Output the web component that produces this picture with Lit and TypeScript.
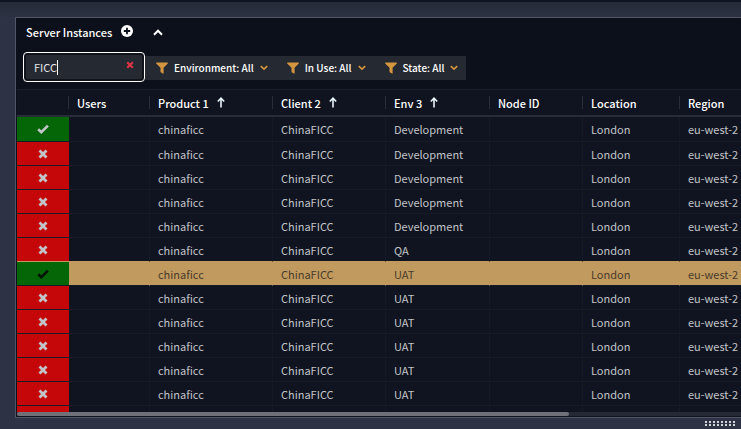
import { LitElement, html, svg, css } from "lit";
import { customElement, property, state } from "lit/decorators.js";
import { classMap } from "lit/directives/class-map.js";

interface Instance {
  up: boolean;
  env: string;
  selected?: boolean;
}

const instances: Instance[] = [
  { up: true, env: "Development" },
  { up: false, env: "Development" },
  { up: false, env: "Development" },
  { up: false, env: "Development" },
  { up: false, env: "Development" },
  { up: false, env: "QA" },
  { up: true, env: "UAT", selected: true },
  { up: false, env: "UAT" },
  { up: false, env: "UAT" },
  { up: false, env: "UAT" },
  { up: false, env: "UAT" },
  { up: false, env: "UAT" },
  { up: false, env: "UAT" },
];

const columns = [
  { key: "status", label: "", sorted: false },
  { key: "users", label: "Users", sorted: false },
  { key: "product", label: "Product 1", sorted: true },
  { key: "client", label: "Client 2", sorted: true },
  { key: "env", label: "Env 3", sorted: true },
  { key: "node", label: "Node ID", sorted: false },
  { key: "location", label: "Location", sorted: false },
  { key: "region", label: "Region", sorted: false },
];

const shapes = {
  plus: { box: "0 0 12 12", body: svg`<circle cx="6" cy="6" r="6" fill="currentColor"/><path d="M6 2.8v6.4M2.8 6h6.4" stroke="#0c101b" stroke-width="1.8"/>` },
  up: { box: "0 0 10 7", body: svg`<path d="M1 5.7 5 1.7 9 5.7" fill="none" stroke="currentColor" stroke-width="2"/>` },
  down: { box: "0 0 8 6", body: svg`<path d="M.8 1.2 4 4.2 7.2 1.2" fill="none" stroke="currentColor" stroke-width="1.7"/>` },
  arrow: { box: "0 0 8 11", body: svg`<path d="M4 10.5V1.5M.8 4.5 4 1.2 7.2 4.5" fill="none" stroke="currentColor" stroke-width="1.6"/>` },
  filter: { box: "0 0 12 12", body: svg`<path d="M.6.5h10.8c.5 0 .7.6.4.9L7.6 5.8v5.4c0 .4-.5.6-.8.4L4.8 10.200a.6.6 0 0 1-.3-.5V5.8L.2 1.4C-.1 1.1.1.5.6.5z" fill="currentColor"/>` },
  check: { box: "0 0 12 10", body: svg`<path d="M1.2 5.2 4.3 8.2 10.9 1.6" fill="none" stroke="currentColor" stroke-width="2.6"/>` },
  cross: { box: "0 0 10 10", body: svg`<path d="M1.5 1.5 8.5 8.5M8.5 1.5 1.5 8.5" fill="none" stroke="currentColor" stroke-width="2.8"/>` },
};

const icon = (name: keyof typeof shapes) =>
  html`<svg class="icon ${name}" viewBox=${shapes[name].box} aria-hidden="true">${shapes[name].body}</svg>`;

const iconStyles = css`
  .icon { display: block; flex: none; }
  .plus { width: 12px; height: 12px; }
  .up { width: 10px; height: 7px; }
  .down { width: 8px; height: 6px; }
  .arrow { width: 8px; height: 11px; }
  .filter { width: 12px; height: 12px; }
  .check { width: 12px; height: 10px; }
  .cross { width: 10px; height: 10px; }
  button {
    border: 0;
    margin: 0;
    padding: 0;
    background: none;
    color: inherit;
    font: inherit;
    cursor: pointer;
  }
`;

@customElement("filter-bar")
export class FilterBar extends LitElement {
  @state() query = "FICC";

  static styles = [
    iconStyles,
    css`
      :host { display: flex; align-items: center; }
      .search {
        position: relative;
        display: flex;
        align-items: center;
        box-sizing: border-box;
        width: 122px;
        height: 30px;
        padding: 2px;
        border: 1px solid #fff;
        border-radius: 4px;
        background: #11141a;
      }
      input {
        box-sizing: border-box;
        width: 100%;
        height: 24px;
        margin: 0;
        padding: 0 24px 0 8px;
        border: 0;
        border-radius: 2px;
        outline: 0;
        background: #252932;
        color: #e6e7ea;
        font: inherit;
      }
      .caret {
        position: absolute;
        left: 33px;
        top: 7px;
        width: 1px;
        height: 15px;
        background: #fff;
      }
      .clear {
        position: absolute;
        right: 10px;
        top: 8px;
        color: #dc3345;
      }
      .clear .icon { width: 8px; height: 8px; }
      .filters { display: flex; background: #252932; margin-top: 1px; }
      .filters button {
        display: flex;
        align-items: center;
        height: 24px;
        padding: 0 8px 0 11px;
        color: #fff;
        font-weight: 500;
        font-size: 10px;
      }
      .filters .icon { color: #d3963f; }
      .filters .filter,
      .filters span { margin-right: 6px; }
    `,
  ];

  render() {
    return html`
      <div class="search">
        <input aria-label="Search instances" .value=${this.query} />
        <span class="caret"></span>
        <button class="clear" aria-label="Clear search" @click=${() => (this.query = "")}>${icon("cross")}</button>
      </div>
      <div class="filters">
        ${["Environment: All", "In Use: All", "State: All"].map(
          (label) => html`<button>${icon("filter")}<span>${label}</span>${icon("down")}</button>`
        )}
      </div>
    `;
  }
}

@customElement("instance-table")
export class InstanceTable extends LitElement {
  @property({ attribute: false }) rows: Instance[] = [];

  static styles = [
    iconStyles,
    css`
      :host { display: flex; flex-direction: column; min-height: 0; background: #0f1420; }
      .viewport { flex: 1; min-height: 0; overflow: hidden; }
      table {
        width: 100%;
        min-width: 960px;
        table-layout: fixed;
        border-collapse: separate;
        border-spacing: 0;
      }
      .status { width: 52px; }
      .users { width: 81px; }
      .product { width: 123px; }
      .client { width: 113px; }
      .env { width: 104px; }
      .node { width: 93px; }
      .location { width: 97px; }
      th, td {
        box-sizing: border-box;
        padding: 0 0 0 8px;
        text-align: left;
        white-space: nowrap;
        line-height: 20px;
      }
      th {
        height: 28px;
        padding: 0;
        border-top: 1px solid #1a1e2a;
        border-bottom: 2px solid #282b38;
        color: #fff;
        font-weight: 500;
      }
      .head {
        display: flex;
        align-items: center;
        gap: 8px;
        box-sizing: border-box;
        height: 13px;
        padding-left: 8px;
        border-right: 1px solid #2b2e3a;
      }
      .head .arrow { color: #e8f4fa; }
      td {
        height: 24px;
        border-bottom: 1px solid #171b28;
        border-right: 1px solid #151926;
        color: #c3c4c8;
      }
      tbody tr:first-child td { height: 25px; }
      td.flag { padding: 0; border-right: 0; background: #c60709; }
      td.flag.ok { background: #046607; }
      .flag .icon { margin: 0 auto; }
      .before td { border-bottom-color: #c19a60; }
      .selected td { background: #c19a60; border-right-color: #c19a60; color: #493a28; }
      .selected td.flag { color: #071307; }
      .track { height: 4px; margin-bottom: 1px; background: #252835; }
      .thumb { width: 76.3%; height: 4px; border-radius: 2px; background: #6f7078; }
    `,
  ];

  render() {
    return html`
      <div class="viewport">
        <table>
          <thead>
            <tr>
              ${columns.map(
                (c) => html`<th class=${c.key} scope="col"><div class="head">${c.label}${c.sorted ? icon("arrow") : ""}</div></th>`
              )}
            </tr>
          </thead>
          <tbody>
            ${this.rows.map(
              (r, i) => html`
                <tr class=${classMap({ selected: !!r.selected, before: !!this.rows[i + 1]?.selected })}>
                  <td class=${classMap({ flag: true, ok: r.up })} aria-label=${r.up ? "Up" : "Down"}>
                    ${icon(r.up ? "check" : "cross")}
                  </td>
                  <td></td>
                  <td>chinaficc</td>
                  <td>ChinaFICC</td>
                  <td>${r.env}</td>
                  <td></td>
                  <td>London</td>
                  <td>eu-west-2</td>
                </tr>
              `
            )}
          </tbody>
        </table>
      </div>
      <div class="track"><div class="thumb"></div></div>
    `;
  }
}

@customElement("app-root")
export class AppRoot extends LitElement {
  static styles = [
    iconStyles,
    css`
      :host {
        display: flex;
        flex-direction: column;
        box-sizing: border-box;
        height: 100vh;
        overflow: hidden;
        border-top: 2px solid #0f1420;
        background: linear-gradient(#252a38, #2d3244 16px);
        color: #fff;
        font: 11px/16px "Noto Sans CJK SC", "Noto Sans", sans-serif;
      }
      .panel {
        flex: 1;
        min-height: 0;
        display: flex;
        flex-direction: column;
        margin: 15px 0 0 15px;
        padding-left: 1px;
        border: 1px solid #515565;
        border-right: 0;
        background: #0c101b;
      }
      header {
        display: flex;
        align-items: center;
        height: 28px;
        padding: 2px 0 0 9px;
      }
      h1 { margin: 0 0 4px; font-size: 11px; font-weight: 500; }
      .add { margin: 0 20px 6px 9px; }
      .collapse { margin-bottom: 3px; }
      filter-bar { padding: 4px 0 7px 6px; }
      instance-table { flex: 1; }
      footer { display: flex; justify-content: flex-end; height: 11px; padding: 3px 6px 0 0; box-sizing: border-box; }
      .grip {
        width: 30px;
        height: 5px;
        background: conic-gradient(from 270deg at 2px 2px, #d5d6da 90deg, transparent 0) 0 0 / 4px 3px;
      }
    `,
  ];

  render() {
    return html`
      <section class="panel">
        <header>
          <h1>Server Instances</h1>
          <button class="add" aria-label="Add instance">${icon("plus")}</button>
          <button class="collapse" aria-label="Collapse">${icon("up")}</button>
        </header>
        <filter-bar></filter-bar>
        <instance-table .rows=${instances}></instance-table>
      </section>
      <footer><div class="grip"></div></footer>
    `;
  }
}
